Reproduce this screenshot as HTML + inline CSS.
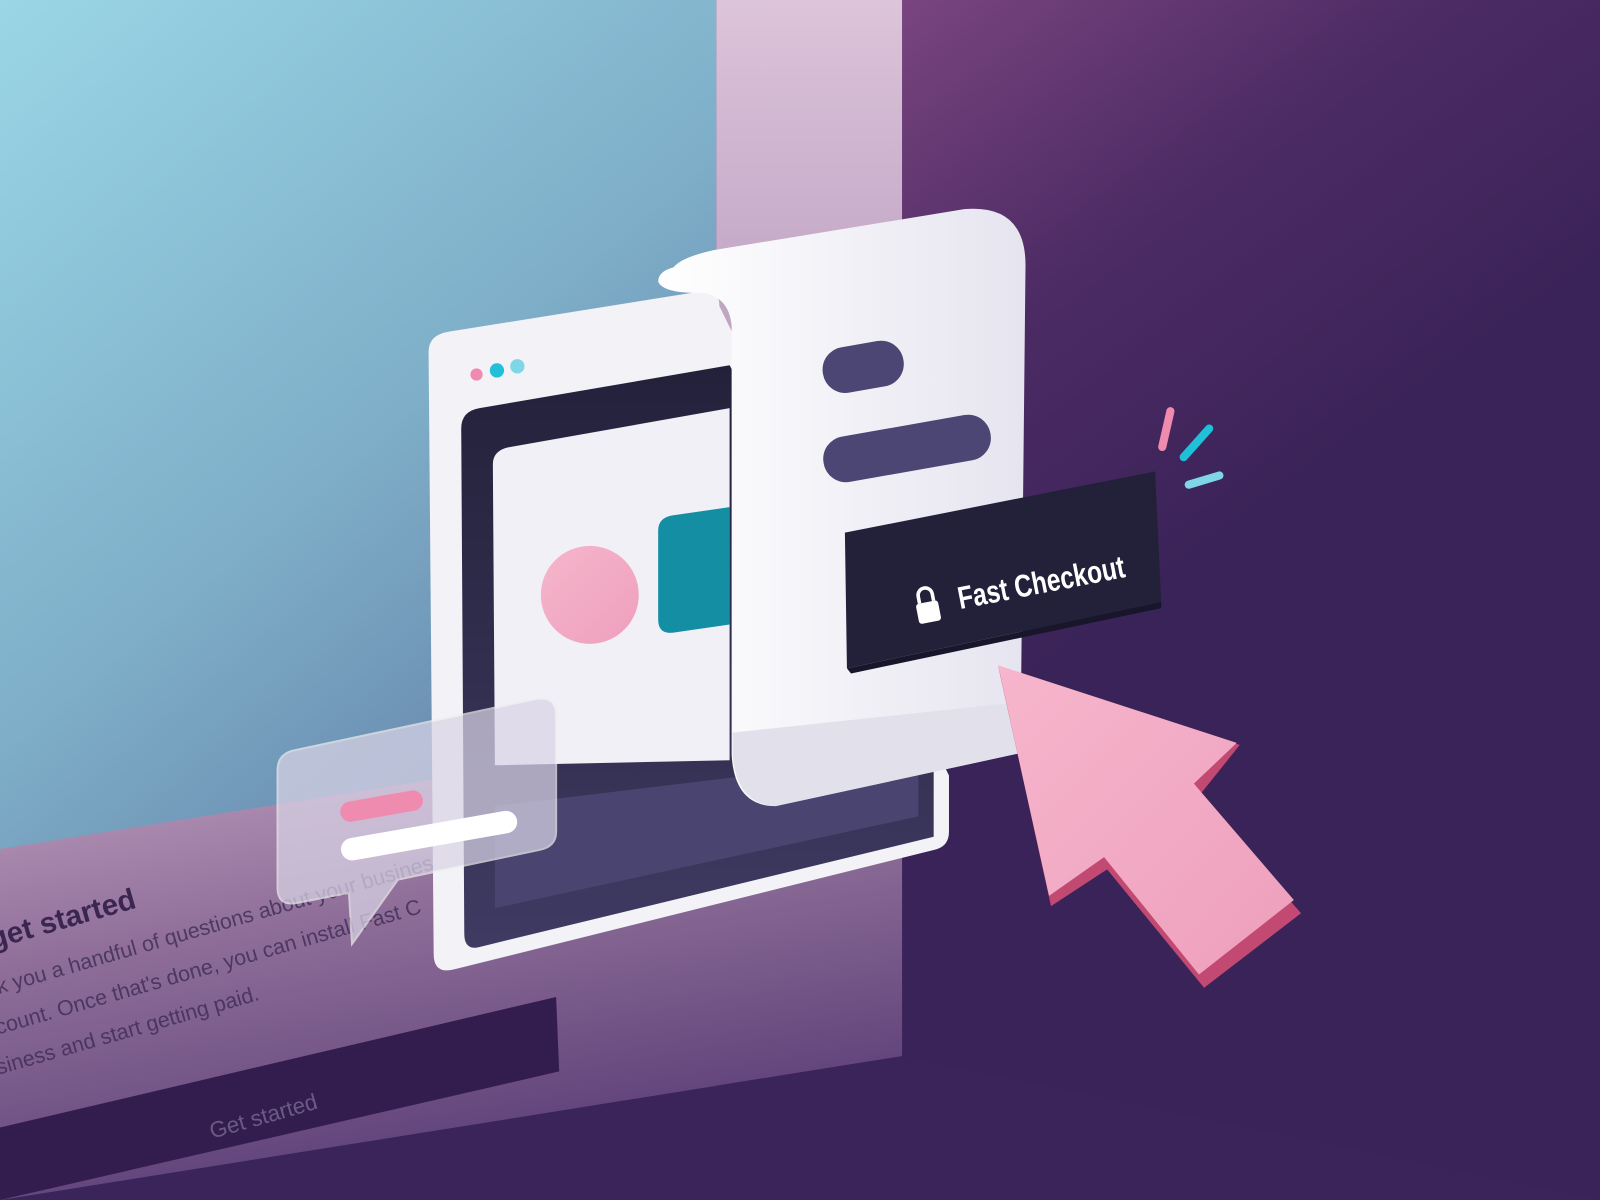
<!DOCTYPE html>
<html><head><meta charset="utf-8"><style>
html,body{margin:0;padding:0;width:1600px;height:1200px;overflow:hidden;background:#3b2459}
svg{display:block}
</style></head><body>
<svg width="1600" height="1200" viewBox="0 0 1568 1176" preserveAspectRatio="none" xmlns="http://www.w3.org/2000/svg">
<defs>
<linearGradient id="bgR" gradientUnits="userSpaceOnUse" x1="880" y1="0" x2="1250" y2="500">
<stop offset="0" stop-color="#7a4580"/><stop offset="0.5" stop-color="#4d2b64"/><stop offset="1" stop-color="#3a2358"/></linearGradient>
<linearGradient id="bgL" x1="0" y1="0" x2="0.5" y2="1">
<stop offset="0" stop-color="#9ad6e6"/><stop offset="0.5" stop-color="#7eaec8"/><stop offset="1" stop-color="#5a6f9c"/></linearGradient>
<linearGradient id="strip" x1="0" y1="0" x2="0" y2="1">
<stop offset="0" stop-color="#dcc4da"/><stop offset="0.4" stop-color="#b69abc"/><stop offset="1" stop-color="#5b3a72"/></linearGradient>
<linearGradient id="card" x1="0" y1="0" x2="0.3" y2="1">
<stop offset="0" stop-color="#c7a6c6"/><stop offset="0.5" stop-color="#8e6e98"/><stop offset="1" stop-color="#5c3f78"/></linearGradient>
<linearGradient id="paper" x1="0" y1="0" x2="1" y2="0">
<stop offset="0" stop-color="#ffffff"/><stop offset="1" stop-color="#e6e4ef"/></linearGradient>
<linearGradient id="pink" x1="0" y1="0" x2="1" y2="1">
<stop offset="0" stop-color="#f6b6cc"/><stop offset="1" stop-color="#ee9fbc"/></linearGradient>
<linearGradient id="screen" x1="0" y1="0" x2="0" y2="1">
<stop offset="0" stop-color="#23213a"/><stop offset="1" stop-color="#3f3a62"/></linearGradient>
</defs>
<rect width="1568" height="1176" fill="url(#bgR)"/>
<rect x="0" y="0" width="702" height="1176" fill="url(#bgL)"/>
<rect x="702" y="0" width="182" height="1040" fill="url(#strip)"/>
<polygon points="0,832 884,690 884,1035 0,1176" fill="url(#card)"/>
<polygon points="884,1035 0,1176 1568,1176 1568,1176" fill="#3b2459"/>
<polygon points="0,1105 545,977 548,1050 0,1176" fill="#331d4e"/>
<g transform="translate(0,928) rotate(-16)" font-family="Liberation Sans, sans-serif">
<text x="-8" y="0" font-size="29" font-weight="bold" fill="#3a2650">get started</text>
<text x="-14" y="44" font-size="21" fill="#3e2c55" opacity="0.8">k you a handful of questions about your business to</text>
<text x="-26" y="82" font-size="21" fill="#3e2c55" opacity="0.8">count. Once that's done, you can install Fast C</text>
<text x="-36" y="120" font-size="21" fill="#3e2c55" opacity="0.8">siness and start getting paid.</text>
<text x="148" y="238" font-size="22" fill="#6b5a85">Get started</text>
</g>
<!-- window -->
<path d="M440,325 L690,285 Q705,283 705,300 L930,760 L930,815 Q930,830 915,833 L445,950 Q425,955 425,935 L420,345 Q420,328 440,325Z" fill="#f3f2f7"/>
<path d="M470,400 L715,358 L915,720 L915,820 L470,928 Q455,932 455,915 L452,420 Q452,403 470,400Z" fill="url(#screen)"/>
<path d="M500,438 L715,400 L715,745 L485,750 L483,455 Q483,441 500,438Z" fill="#f1f0f6"/>
<polygon points="485,790 900,740 900,800 485,890" fill="#4a4570"/>
<circle cx="578" cy="583" r="48" fill="url(#pink)"/>
<path d="M660,505 L715,497 L715,612 L660,620 Q645,622 645,607 L645,520 Q645,507 660,505Z" fill="#138ea3"/>
<circle cx="467" cy="367" r="6" fill="#f08bb0"/>
<circle cx="487" cy="363" r="7" fill="#1fc0d8"/>
<circle cx="507" cy="359" r="7" fill="#7fd6e6"/>
<!-- paper -->
<path d="M660,262 Q645,266 645,276 Q650,288 690,287 Q715,292 717,320 L717,740 Q720,790 760,790 L1000,738 L1005,260 Q1005,200 945,205 L700,245 Q668,252 660,262Z" fill="url(#paper)"/>
<path d="M718,718 L1000,688 L1000,738 L760,790 Q722,788 718,740Z" fill="#e2e0ea"/>
<rect x="806" y="337" width="80" height="45" rx="22" transform="rotate(-10 846 360)" fill="#4b4674"/>
<rect x="806" y="417" width="166" height="45" rx="22" transform="rotate(-10 889 440)" fill="#4b4674"/>
<!-- button -->
<polygon points="828,522 1132,462 1138,590 830,655" fill="#23213a"/>
<polygon points="830,655 1138,590 1138,596 834,660" fill="#17162b"/>
<g transform="rotate(-11 1000 560)">
<text x="935" y="585" font-family="Liberation Sans, sans-serif" font-size="31" font-weight="bold" fill="#fff" textLength="166" lengthAdjust="spacingAndGlyphs">Fast Checkout</text>
<rect x="893" y="572" width="22" height="20" rx="3" fill="#fff"/>
<path d="M897,572 v-7 a7,7 0 0 1 14,0 v7" fill="none" stroke="#fff" stroke-width="3.5"/>
</g>
<!-- sparks -->
<line x1="1147" y1="403" x2="1139" y2="438" stroke="#f08bb0" stroke-width="8" stroke-linecap="round"/>
<line x1="1185" y1="420" x2="1160" y2="448" stroke="#1fc0d8" stroke-width="8" stroke-linecap="round"/>
<line x1="1195" y1="466" x2="1165" y2="475" stroke="#7fd6e6" stroke-width="8" stroke-linecap="round"/>
<!-- cursor -->
<polygon points="980,660 1030,888 1085,852 1180,968 1275,895 1175,780 1215,730" fill="#c24a72"/>
<polygon points="978,652 1028,878 1082,840 1175,955 1268,882 1170,768 1212,728" fill="url(#pink)"/>
<polygon points="978,652 1028,878 1030,888 980,660" fill="#b9406a"/>
<!-- chat bubble -->
<path d="M290,735 L525,685 Q545,682 545,700 L545,815 Q545,830 528,833 L390,862 L345,925 L342,875 L290,885 Q272,888 272,870 L272,755 Q272,738 290,735Z" fill="#d9d4e6" opacity="0.72" stroke="#eee" stroke-width="2"/>
<rect x="333" y="780" width="82" height="20" rx="10" transform="rotate(-10 374 790)" fill="#f08bb0"/>
<rect x="333" y="808" width="175" height="22" rx="11" transform="rotate(-10 420 819)" fill="#ffffff"/>
</svg>
</body></html>
